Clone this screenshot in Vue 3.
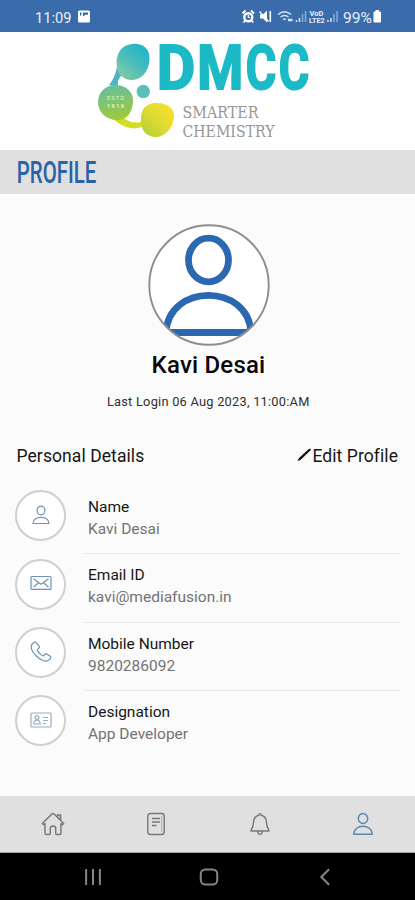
<script setup>
const rows = [
  { icon: 'user', label: 'Name', value: 'Kavi Desai' },
  { icon: 'mail', label: 'Email ID', value: 'kavi@mediafusion.in' },
  { icon: 'phone', label: 'Mobile Number', value: '9820286092' },
  { icon: 'card', label: 'Designation', value: 'App Developer' },
]
</script>

<template>
  <div class="screen">
    <header class="status">
      <svg width="415" height="32" viewBox="0 0 415 32">
        <g fill="#e6f0ff">
          <text x="35" y="22.5" font-size="15.5" textLength="36.5" lengthAdjust="spacingAndGlyphs">11:09</text>
          <rect x="78" y="10.5" width="12" height="12" rx="1.5" fill="#fff" />
          <path d="M80 12.500h1.500v3h-1.500zM83 12.500h5v2.500l-2-.5-3 2z" fill="#3a6cab" />
          <circle cx="248.300" cy="17.200" r="4" fill="none" stroke="#fff" stroke-width="2.400" />
          <path d="M248.300 15v2.500h2" fill="none" stroke="#fff" stroke-width="1.200" />
          <path d="M242.500 13.500l3-3M254 13.500l-3-3M245 20.500l-1.500 2M251.600 20.500l1.500 2" stroke="#fff" stroke-width="1.800" />
          <path d="M260 14.500h3l4-4v12l-4-4h-3z" fill="#fff" />
          <path d="M259.500 11.500l9 10" stroke="#fff" stroke-width="1.300" />
          <path d="M270.300 11v11" stroke="#fff" stroke-width="1.600" />
          <g fill="none" stroke="#d4e4f8" stroke-width="1.500">
            <path d="M278 14.500q6.500-5.500 13 0M280.500 17q4-3.200 8 0M283 19.500q1.500-1.200 3 0" />
            <path d="M288 20h4.500" stroke-width="2.500" />
            <path d="M296.500 22v-2M299.500 22v-4" />
            <path d="M302.500 22v-8M305.500 22v-11" stroke="#88aada" />
            <path d="M328 22v-2M331 22v-4" />
            <path d="M334 22v-8M337 22v-11" stroke="#88aada" />
          </g>
          <text x="309.500" y="16" font-size="6.500" font-weight="700" textLength="14" lengthAdjust="spacingAndGlyphs">VoD</text>
          <text x="309" y="23.300" font-size="6.500" font-weight="700" textLength="15.500" lengthAdjust="spacingAndGlyphs">LTE2</text>
          <text x="343" y="22.800" font-size="15.500" textLength="29" lengthAdjust="spacingAndGlyphs">99%</text>
          <path d="M373.500 12.500q0-1 1-1h1v-1.500h3.500v1.500h1q1 0 1 1v9q0 1-1 1h-5.500q-1 0-1-1z" fill="#fff" />
        </g>
      </svg>
    </header>

    <div class="brand">
      <svg width="415" height="118" viewBox="0 32 415 118">
        <defs>
          <linearGradient id="gTop" x1="1" y1="0" x2="0.200" y2="1">
            <stop offset="0" stop-color="#14b3cb" /><stop offset="0.500" stop-color="#43bbbd" /><stop offset="1" stop-color="#86cba3" />
          </linearGradient>
          <linearGradient id="gLeft" x1="0.400" y1="0" x2="0.600" y2="1">
            <stop offset="0" stop-color="#67bfa0" /><stop offset="1" stop-color="#a0cb36" />
          </linearGradient>
          <linearGradient id="gRight" x1="1" y1="0" x2="0" y2="1">
            <stop offset="0" stop-color="#fde02c" /><stop offset="0.500" stop-color="#e0db32" /><stop offset="1" stop-color="#a9cf37" />
          </linearGradient>
        </defs>
        <path d="M117 67q-2 11-8 18l9 1q-1-7 4-11z" fill="#4fb5c5" />
        <path d="M113 119q15 13 29 8l-1-5q-10 2-17-4z" fill="#d2de22" />
        <path d="M132 44c10-1 17.500 4 17.500 14 0 12-7 22-18 22-9 0-15-7-15-17 0-11 6-18 15.500-19z" fill="url(#gTop)" />
        <path d="M115 85c11 0 19 7 18 17-1 11-6 18-16 18-11 0-19-8-19-18 0-9 7-17 17-17z" fill="url(#gLeft)" />
        <path d="M155 103c11-1 20 5 19 14-1 12-10 21-20 20-9-1-14-9-13-19 0-9 5-14 14-15z" fill="url(#gRight)" />
        <circle cx="143.300" cy="91.500" r="6.700" fill="#5abfba" />
        <g fill="#e6f3d0" font-size="5.500">
          <text x="107" y="100" textLength="17">ESTD</text>
          <text x="107" y="107.500" font-weight="700" textLength="17">1919</text>
        </g>
        <g font-size="61.500" font-weight="700" fill="#1cbac5" stroke="#1cbac5" stroke-width="2">
          <text y="88.700">
            <tspan x="156.800" textLength="38.500" lengthAdjust="spacingAndGlyphs">D</tspan><tspan x="197.300" textLength="46" lengthAdjust="spacingAndGlyphs">M</tspan><tspan x="245.700" textLength="30.500" lengthAdjust="spacingAndGlyphs">C</tspan><tspan x="278.800" textLength="30.500" lengthAdjust="spacingAndGlyphs">C</tspan>
          </text>
        </g>
        <g class="slab" fill="#969696" font-size="16.300">
          <text x="182.500" y="118" textLength="76" lengthAdjust="spacingAndGlyphs">SMARTER</text>
          <text x="182.500" y="137" textLength="92" lengthAdjust="spacingAndGlyphs">CHEMISTRY</text>
        </g>
      </svg>
    </div>

    <div class="title">
      <svg width="415" height="44" viewBox="0 0 415 44">
        <text x="16.800" y="33.200" font-size="31" font-weight="500" fill="#2a62a6" textLength="79.500" lengthAdjust="spacingAndGlyphs">PROFILE</text>
      </svg>
    </div>

    <main class="content">
      <svg class="avatar" width="122" height="122" viewBox="0 0 122 122">
        <defs><clipPath id="round"><circle cx="61" cy="61" r="60" /></clipPath></defs>
        <circle cx="61" cy="61" r="60" fill="#fff" />
        <g clip-path="url(#round)" fill="none" stroke="#2c68b0" stroke-width="6.800">
          <ellipse cx="60.500" cy="36" rx="20" ry="21.800" />
          <path d="M18 108.500C20.500 59 100.500 59 103 108.500z" />
        </g>
        <circle cx="61" cy="61" r="59.700" fill="none" stroke="#8e8e8e" stroke-width="1.900" />
      </svg>
      <h1 class="name">Kavi Desai</h1>
      <p class="login">Last Login 06 Aug 2023, 11:00:AM</p>

      <div class="section">
        <span class="personal">Personal Details</span>
        <span class="edit">
          <svg width="16" height="16" viewBox="0 0 16 16"><path d="M1.500 13l1.500-3L12.500 1.200l2-.7.300 1.500L4.500 12z" fill="#111" /></svg>
          <span>Edit Profile</span>
        </span>
      </div>

      <ul class="list">
        <li v-for="row in rows" :key="row.label" class="row">
          <span class="disc">
            <svg v-if="row.icon === 'user'" class="glyph" viewBox="0 0 24 24">
              <ellipse cx="12" cy="6.500" rx="3.900" ry="4.300" />
              <path d="M4 19.500c0-8.300 16-8.300 16 0z" />
            </svg>
            <svg v-else-if="row.icon === 'mail'" class="glyph" viewBox="0 0 24 24">
              <rect x="2" y="4.500" width="20" height="12.800" rx="1" />
              <path d="M4.500 6.800l7.500 5.500 7.500-5.500M4.500 15l4.800-4M19.500 15l-4.800-4" />
            </svg>
            <svg v-else-if="row.icon === 'phone'" class="glyph" viewBox="0 0 24 24">
              <path d="M5.200 2.200c-5.500 3.300-2.500 9.300 1.500 13.300 4.500 4.500 11.300 8.700 15 2.500.4-.8.200-1.200-.5-1.700l-3.500-2.300c-.8-.5-1.300-.3-1.800.3l-1 1.200c-.7.800-1.600.3-2.700-.6-1.400-1.200-2.500-2.300-3.500-3.800-.7-1-.6-1.600.2-2.200l1.100-.9c.6-.5.700-1 .2-1.700L7.300 2.800c-.6-.8-1.200-1.200-2.100-.6z" />
            </svg>
            <svg v-else class="glyph faded" viewBox="0 0 24 24">
              <rect x="2" y="4" width="20" height="14" rx="1" />
              <circle cx="8" cy="8.500" r="1.900" />
              <path d="M4.800 15c0-5 6.400-5 6.400 0zM14 8.500h5M14 11.500h5M14 14.500h3" />
            </svg>
          </span>
          <div class="text">
            <span class="label">{{ row.label }}</span>
            <span class="value">{{ row.value }}</span>
          </div>
        </li>
      </ul>
    </main>

    <nav class="tabs">
      <svg viewBox="0 0 26 26">
        <path d="M2.300 12.500L12.500 2.600q.5-.4 1 0L23.700 12.500l-1.300 1.300-1.400-1.200v9.400q0 1.500-1.500 1.500h-2.800q-1 0-1-1v-5.200q0-2.300-2.700-2.300t-2.700 2.300v5.200q0 1-1 1H6.500Q5 23.500 5 22v-9.400l-1.400 1.200z" />
        <path d="M17.500 5.800V4h3v5" stroke-width="1.700" />
      </svg>
      <svg viewBox="0 0 26 26">
        <rect x="4.800" y="2.500" width="16.400" height="21" rx="2.700" />
        <path d="M9 7.500h8M9 11h8M9 14.500h4.500" stroke-width="1.500" />
        <path d="M18.700 5v16.500" stroke="#aaa" stroke-width=".8" />
      </svg>
      <svg viewBox="0 0 26 26">
        <path d="M11.800 4.200Q11.800 2.600 13 2.600t1.200 1.600c3.700.8 5.200 3.600 5.300 7.300.1 3.400.5 5.200 2.300 7.300v1.200H4.200v-1.200c1.800-2.100 2.200-3.900 2.300-7.300.1-3.700 1.600-6.500 5.300-7.300zM10.800 20.500c.2 3.800 4.200 3.800 4.400 0" />
      </svg>
      <svg class="active" viewBox="0 0 26 26">
        <ellipse cx="13" cy="7.500" rx="4.700" ry="5" />
        <path d="M3.800 23.300c0-10.800 18.400-10.800 18.400 0z" />
      </svg>
    </nav>

    <footer class="system">
      <svg viewBox="0 0 24 24"><path d="M4.500 3.200v17.600M12 3.200v17.600M19.500 3.200v17.600" /></svg>
      <svg viewBox="0 0 24 24"><rect x="3" y="3.800" width="18" height="16.400" rx="5" /></svg>
      <svg viewBox="0 0 24 24"><path d="M16.500 3.500L8 12l8.500 8.500" /></svg>
    </footer>
  </div>
</template>

<style>
body {
  background: #fbfbfb;
}
</style>

<style scoped>
.screen {
  width: 415px;
  height: 900px;
  display: flex;
  flex-direction: column;
  overflow: hidden;
  background: #fbfbfb;
  color: #161616;
  font-family: Roboto, "Liberation Sans", sans-serif;
}
svg {
  display: block;
  flex: none;
}
.status {
  height: 32px;
  background: #3a6cab;
}
.brand {
  height: 118px;
  background: #fff;
}
.slab {
  font-family: "DejaVu Serif", serif;
}
.title {
  height: 44px;
  background: #e0e0e0;
}
.content {
  height: 601.5px;
  flex: none;
  box-sizing: border-box;
  padding: 30px 15px 0;
  display: flex;
  flex-direction: column;
}
.avatar {
  align-self: center;
  margin-left: 2px;
}
.name {
  margin: 5px 0 0 2px;
  text-align: center;
  font-size: 24px;
  line-height: 28px;
  font-weight: 500;
  letter-spacing: 0.2px;
  color: #080808;
}
.login {
  margin: 15px 0 0 1.5px;
  text-align: center;
  font-size: 12.8px;
  line-height: 16px;
  letter-spacing: 0.25px;
  color: #303030;
}
.section {
  margin-top: 34px;
  display: flex;
  justify-content: space-between;
  line-height: 24px;
  font-size: 17.5px;
  letter-spacing: 0.08px;
  padding: 0 2px 0 1.5px;
}
.edit {
  display: flex;
  align-items: center;
}
.list {
  list-style: none;
  margin: 18px 0 0;
  padding: 0;
}
.row {
  display: flex;
  align-items: center;
  height: 68.4px;
  gap: 19px;
}
.disc {
  width: 51px;
  height: 51px;
  margin-bottom: 9px;
  box-sizing: border-box;
  border: 2px solid #cfcfcf;
  border-radius: 50%;
  background: #fff;
  display: flex;
  align-items: center;
  justify-content: center;
}
.glyph {
  width: 24px;
  height: 24px;
  fill: none;
  stroke: #6c90b9;
  stroke-width: 1.2;
}
.faded {
  stroke: #94afc5;
}
.text {
  flex: 1;
  height: 100%;
  box-sizing: border-box;
  padding: 9.8px 0 0 3px;
  display: flex;
  flex-direction: column;
  border-bottom: 1px solid #e6e6e6;
}
.row:last-child .text {
  border-bottom: 0;
}
.label,
.value {
  font-size: 15.5px;
  line-height: 22px;
}
.value {
  color: #737373;
}
.tabs {
  height: 57px;
  flex: none;
  box-sizing: border-box;
  padding-left: 1px;
  background: #e0e0e0;
  border-bottom: 1px solid #aaa;
  display: grid;
  grid-template-columns: repeat(4, 1fr);
  place-items: center;
}
.tabs svg {
  width: 26px;
  height: 26px;
  fill: none;
  stroke: #777;
  stroke-width: 1.4;
  stroke-linejoin: round;
}
.tabs .active {
  stroke: #5f86b2;
}
.system {
  flex: 1;
  background: #000;
  padding: 2px 32px 0 35px;
  display: grid;
  grid-template-columns: repeat(3, 1fr);
  place-items: center;
}
.system svg {
  width: 22px;
  height: 22px;
  fill: none;
  stroke: #858585;
  stroke-width: 2.2;
}
</style>
